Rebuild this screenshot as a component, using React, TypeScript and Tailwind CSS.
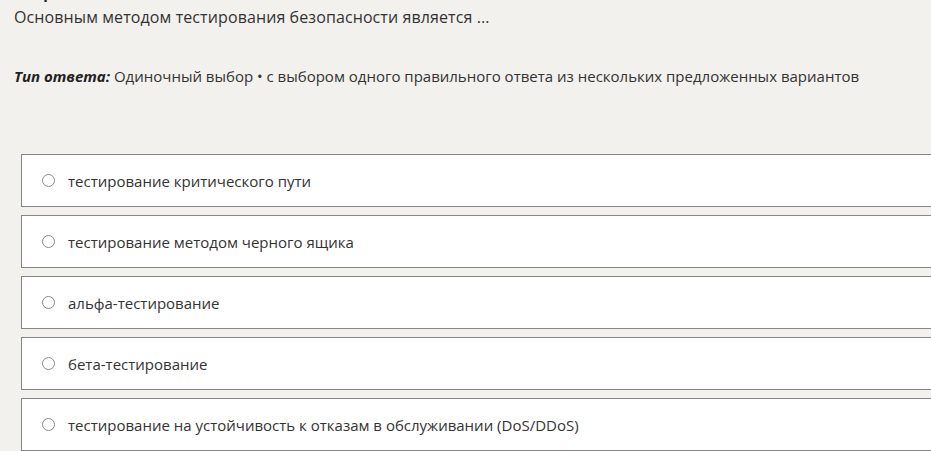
import React from "react";

const options = [
  "тестирование критического пути",
  "тестирование методом черного ящика",
  "альфа-тестирование",
  "бета-тестирование",
  "тестирование на устойчивость к отказам в обслуживании (DoS/DDoS)",
];

export default function App() {
  return (
    <div
      className="w-[931px] h-[451px] overflow-hidden bg-[#f2f1ee] text-[#333333]"
      style={{ fontFamily: '"Open Sans", "Noto Sans", sans-serif' }}
    >
      <div className="pl-[14px] -mt-[17px]">
        <div className="text-[15px] font-bold leading-[20px] text-[#222] h-[20px]">Вопрос</div>
        <div className="text-[16px] leading-[22px] mt-[3px] tracking-[0.1px]">
          Основным методом тестирования безопасности является ...
        </div>
        <div className="text-[15px] leading-[20px] mt-[38px]">
          <span className="font-bold italic text-[#222]">Тип ответа:</span> Одиночный выбор • с выбором одного
          правильного ответа из нескольких предложенных вариантов
        </div>
      </div>
      <div className="mt-[68px] ml-[21px] flex flex-col gap-[8px]">
        {options.map((o) => (
          <div
            key={o}
            className="w-[930px] h-[53px] shrink-0 border border-[#858585] bg-white flex items-center pl-[20px]"
          >
            <span className="w-[13px] h-[13px] rounded-full border-[1.5px] border-[#8a8a8a] shrink-0" />
            <span className="ml-[13px] text-[15px] leading-[20px]">{o}</span>
          </div>
        ))}
      </div>
    </div>
  );
}
